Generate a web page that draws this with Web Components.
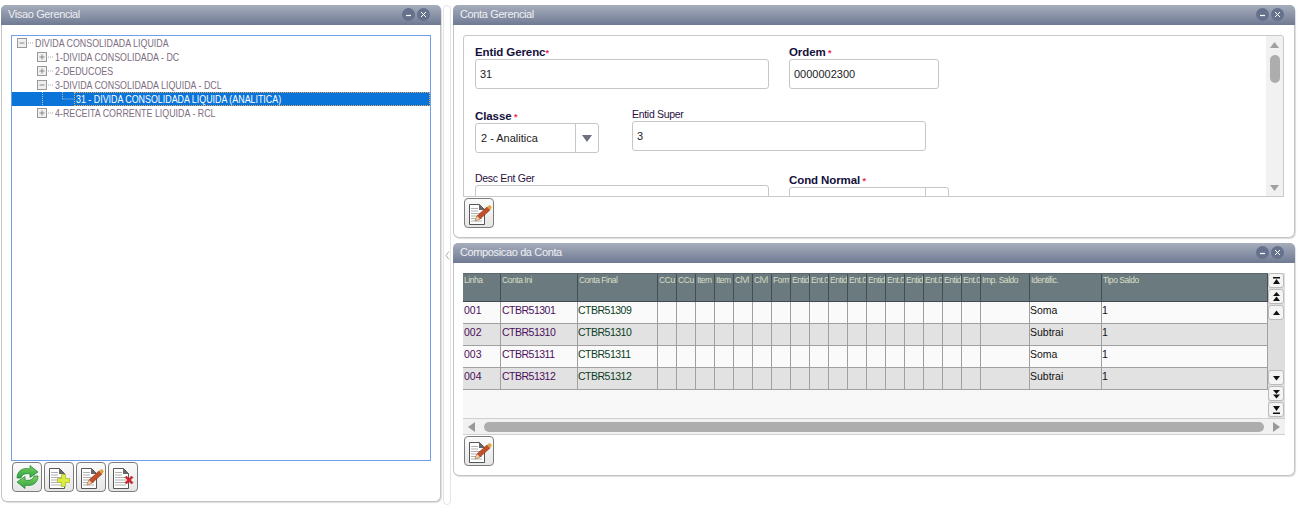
<!DOCTYPE html>
<html>
<head>
<meta charset="utf-8">
<title>Visao Gerencial</title>
<style>
  html, body { margin: 0; padding: 0; background: #fff; }
  body { font-family: "Liberation Sans", sans-serif; font-size: 11px; width: 1300px; height: 508px; overflow: hidden; }
  .page { display: flex; padding: 5px 5px 0 1px; height: 503px; box-sizing: border-box; }
  .right { display: flex; flex-direction: column; gap: 5px; width: 842px; }
</style>
</head>
<body>
<div class="page">
  <app-panel heading="Visao Gerencial" style="width:440px;height:497px">
    <app-tree>
      <tree-node kind="minus" depth="0">DIVIDA CONSOLIDADA LIQUIDA</tree-node>
      <tree-node kind="plus" depth="1">1-DIVIDA CONSOLIDADA - DC</tree-node>
      <tree-node kind="plus" depth="1">2-DEDUCOES</tree-node>
      <tree-node kind="minus" depth="1">3-DIVIDA CONSOLIDADA LIQUIDA - DCL</tree-node>
      <tree-node kind="leaf" depth="2" selected>31 - DIVIDA CONSOLIDADA LIQUIDA (ANALITICA)</tree-node>
      <tree-node kind="plus" depth="1">4-RECEITA CORRENTE LIQUIDA - RCL</tree-node>
    </app-tree>
    <div slot="actions" style="display:flex;gap:2px">
      <icon-button icon="refresh"></icon-button>
      <icon-button icon="add"></icon-button>
      <icon-button icon="edit"></icon-button>
      <icon-button icon="delete"></icon-button>
    </div>
  </app-panel>
  <panel-splitter></panel-splitter>
  <div class="right">
    <app-panel heading="Conta Gerencial" style="height:233px">
      <form-scroll>
        <div style="display:flex;gap:20px;height:53px">
          <form-field label="Entid Gerenc" required strong value="31" style="width:294px"></form-field>
          <form-field label="Ordem" required strong spaced value="0000002300" style="width:150px"></form-field>
        </div>
        <div style="display:flex;gap:33px;height:64px;margin-top:9px">
          <form-field label="Classe" required strong spaced value="2 - Analitica" select style="width:124px;padding-top:2px"></form-field>
          <form-field label="Entid Super" value="3" style="width:294px"></form-field>
        </div>
        <div style="display:flex;gap:20px">
          <form-field label="Desc Ent Ger" value="" style="width:294px"></form-field>
          <form-field label="Cond Normal" required strong spaced value="" select style="width:160px;padding-top:2px"></form-field>
        </div>
      </form-scroll>
      <div slot="actions"><icon-button icon="edit"></icon-button></div>
    </app-panel>
    <app-panel heading="Composicao da Conta" style="height:233px">
      <data-grid></data-grid>
      <div slot="actions"><icon-button icon="edit"></icon-button></div>
    </app-panel>
  </div>
</div>

<script>
// panel with title bar, body and a row of buttons
class AppPanel extends HTMLElement {
  constructor() {
    super();
    this.attachShadow({ mode: 'open' });
  }

  connectedCallback() {
    this.shadowRoot.innerHTML = `
      <style>
        :host { display: flex; flex-direction: column; box-sizing: border-box; background: #fff;
          border: 1px solid #c4c4c4; border-top: 0; border-radius: 6px;
          box-shadow: 1px 1px 1px #ddd; }
        .bar { height: 20px; flex: none; display: flex; align-items: center; padding: 0 11px 2px 7px; margin: 0 -1px; box-sizing: border-box;
          border-radius: 5px 5px 0 0; color: #eef0f4; letter-spacing: -.37px;
          background: linear-gradient(#a6adbc, #6f7a93); font: 11px "Liberation Sans", sans-serif; }
        .title { flex: 1; }
        .btn { width: 13px; height: 13px; border-radius: 50%; background: #66718d; margin-left: 2px;
          display: flex; align-items: center; justify-content: center; }
        .btn svg { display: block; }
        .body { flex: 1; min-height: 0; padding: 10px 9px 0 9px; display: flex; flex-direction: column; }
        .actions { flex: none; padding: 1px 9px 0 10px; height: 40px; box-sizing: border-box; }
      </style>
      <div class="bar">
        <span class="title">${this.getAttribute('heading')}</span>
        <span class="btn"><svg width="7" height="7"><path d="M1 4.5h5" stroke="#fff" stroke-width="1.2"/></svg></span>
        <span class="btn"><svg width="7" height="7"><path d="M1 1l5 5M6 1l-5 5" stroke="#fff" stroke-width="1"/></svg></span>
      </div>
      <div class="body"><slot></slot></div>
      <div class="actions"><slot name="actions"></slot></div>
    `;
  }
}
customElements.define('app-panel', AppPanel);

class PanelSplitter extends HTMLElement {
  constructor() {
    super();
    this.attachShadow({ mode: 'open' });
    this.shadowRoot.innerHTML = `
      <style>
        :host { display: flex; align-items: center; justify-content: center; flex: none; box-sizing: border-box;
          width: 8px; margin: 0 2px 0 2px; height: 500px; border: 1px solid #e4e4e4; border-radius: 4px; }
      </style>
      <svg width="5" height="9"><path d="M4 .5L1 4.5l3 4" fill="none" stroke="#aaa"/></svg>
    `;
  }
}
customElements.define('panel-splitter', PanelSplitter);

class AppTree extends HTMLElement {
  constructor() {
    super();
    this.attachShadow({ mode: 'open' });
    this.shadowRoot.innerHTML = `
      <style>
        :host { display: block; flex: 1; min-height: 0; box-sizing: border-box; border: 1px solid #6f9fe8; background: #fff; }
      </style>
      <slot></slot>
    `;
  }
}
customElements.define('app-tree', AppTree);

class TreeNode extends HTMLElement {
  constructor() {
    super();
    this.attachShadow({ mode: 'open' });
  }

  connectedCallback() {
    const kind = this.getAttribute('kind');
    const depth = Number(this.getAttribute('depth'));
    const selected = this.hasAttribute('selected');
    let glyph = '';
    let indent = [5, 25, 0][depth];
    if (kind === 'leaf') {
      glyph = `<svg width="62" height="14"><path d="M30.5 0v14" stroke="#b9c4d4" stroke-dasharray="1 1"/><path d="M50.5 0v7M50.5 7h11" stroke="#b9c4d4" stroke-dasharray="1 1"/></svg>`;
    } else {
      const cross = kind === 'plus' ? '<path d="M5 2.5v5" stroke="#888"/>' : '';
      glyph = `<svg width="18" height="14"><g transform="translate(0 2)"><rect x=".5" y=".5" width="9" height="9" fill="#efefef" stroke="#999"/><path d="M2.5 5h5" stroke="#888"/>${cross}<path d="M11 5h5" stroke="#aaa" stroke-dasharray="1 1"/></g></svg>`;
    }
    this.shadowRoot.innerHTML = `
      <style>
        :host { display: block; }
        .row { height: 14px; display: flex; align-items: center; padding-left: ${indent}px; box-sizing: border-box;
          font: 10.5px "Liberation Sans", sans-serif; white-space: nowrap;
          background: ${selected ? '#0a74d8' : 'transparent'}; color: ${selected ? '#fff' : '#7d6d80'}; }
        svg { display: block; flex: none; }
        .sel { flex: 1; height: 14px; box-sizing: border-box; border: 1px dotted #e8a860; line-height: 12px; padding-left: 1px; }
        .label { display: inline-block; transform: scaleX(.845); transform-origin: 0 50%; }
      </style>
      <div class="row">${glyph}${selected ? '<span class="sel"><span class="label"><slot></slot></span></span>' : '<span class="label"><slot></slot></span>'}</div>
    `;
  }
}
customElements.define('tree-node', TreeNode);

class FormScroll extends HTMLElement {
  constructor() {
    super();
    this.attachShadow({ mode: 'open' });
    this.shadowRoot.innerHTML = `
      <style>
        :host { display: flex; flex: 1; min-height: 0; box-sizing: border-box; border: 1px solid #c8c8c8; border-radius: 3px 3px 0 0; overflow: hidden; margin-right: 1px; }
        .content { flex: 1; min-width: 0; padding: 9px 0 0 11px; overflow: hidden; }
        .track { flex: none; width: 17px; background: #f1f1f1; display: flex; flex-direction: column; align-items: center; padding-top: 6px; position: relative; }
        .thumb { width: 10px; height: 28px; border-radius: 5px; background: #adadad; margin-top: 7px; }
        .down { position: absolute; bottom: 5px; }
        svg { display: block; }
      </style>
      <div class="content"><slot></slot></div>
      <div class="track">
        <svg width="9" height="6"><path d="M4.5 0L9 6H0z" fill="#a0a0a0"/></svg>
        <div class="thumb"></div>
        <svg class="down" width="9" height="6"><path d="M4.5 6L9 0H0z" fill="#a0a0a0"/></svg>
      </div>
    `;
  }
}
customElements.define('form-scroll', FormScroll);

class FormField extends HTMLElement {
  constructor() {
    super();
    this.attachShadow({ mode: 'open' });
  }

  connectedCallback() {
    const strong = this.hasAttribute('strong');
    const required = this.hasAttribute('required');
    const gap = this.hasAttribute('spaced') ? ' ' : '';
    const select = this.hasAttribute('select');
    this.shadowRoot.innerHTML = `
      <style>
        :host { display: block; box-sizing: border-box; }
        .label { height: 14px; color: ${strong ? '#14103c' : '#2a1040'};
          font: ${strong ? 'bold 11.5px' : '10.5px'}/15px "Liberation Sans", sans-serif; white-space: pre;
          letter-spacing: ${strong ? '-.1px' : '-.3px'}; }
        .req { color: #ef2b55; font-size: 9px; font-weight: bold; }
        .box { height: 30px; box-sizing: border-box; border: 1px solid #c6c6c6; border-radius: 3px; display: flex; background: #fff;
          font: 11px/28px "Liberation Sans", sans-serif; color: #222; }
        .val { flex: 1; padding-left: ${select ? 5 : 4}px; min-width: 0; }
        .arrow { flex: none; width: 22px; border-left: 1px solid #c6c6c6; display: flex; align-items: center; justify-content: center; }
      </style>
      <div class="label">${this.getAttribute('label')}${required ? `<span class="req">${gap}*</span>` : ''}</div>
      <div class="box">
        <span class="val">${this.getAttribute('value')}</span>
        ${select ? '<span class="arrow"><svg width="10" height="7"><path d="M5 7L10 0H0z" fill="#6c7080"/></svg></span>' : ''}
      </div>
    `;
  }
}
customElements.define('form-field', FormField);

const GRID_COLS = [
  ['Linha', 38], ['Conta Ini', 77], ['Conta Final', 80],
  ['CCu', 19], ['CCu', 19], ['Item', 19], ['Item', 19], ['ClVl', 19], ['ClVl', 19], ['Form', 19],
  ['Entid', 19], ['Ent.0', 19], ['Entid', 19], ['Ent.0', 19], ['Entid', 19], ['Ent.0', 19],
  ['Entid', 19], ['Ent.0', 19], ['Entid', 19], ['Ent.0', 19],
  ['Imp. Saldo', 49], ['Identific.', 72], ['Tipo Saldo', 166]
];
const GRID_ROWS = [
  ['001', 'CTBR51301', 'CTBR51309', 'Soma', '1'],
  ['002', 'CTBR51310', 'CTBR51310', 'Subtrai', '1'],
  ['003', 'CTBR51311', 'CTBR51311', 'Soma', '1'],
  ['004', 'CTBR51312', 'CTBR51312', 'Subtrai', '1']
];

class DataGrid extends HTMLElement {
  constructor() {
    super();
    this.attachShadow({ mode: 'open' });
  }

  connectedCallback() {
    const template = GRID_COLS.map(c => c[1] + 'px').join(' ');
    const head = GRID_COLS.map(c => `<div class="h">${c[0]}</div>`).join('');
    const rows = GRID_ROWS.map((r, i) => {
      const cells = GRID_COLS.map((c, n) => {
        let text = '';
        let cls = 'c';
        if (n === 0) { text = r[0]; cls += ' linha'; }
        if (n === 1) { text = r[1]; cls += ' ini'; }
        if (n === 2) { text = r[2]; cls += ' fim'; }
        if (n === 21) text = r[3];
        if (n === 22) text = r[4];
        return `<div class="${cls}">${text}</div>`;
      }).join('');
      return `<div class="row ${i % 2 ? 'odd' : ''}">${cells}</div>`;
    }).join('');
    const side = (d) => `<span class="sb"><svg width="11" height="10"><path d="${d}" fill="#111"/></svg></span>`;
    this.shadowRoot.innerHTML = `
      <style>
        :host { display: flex; flex-direction: column; flex: 1; min-height: 0; }
        .top { display: flex; flex: 1; min-height: 0; background: #f8f8f8; }
        .table { flex: none; width: 805px; }
        .row, .head { display: grid; grid-template-columns: ${template}; }
        .head { height: 29px; background: #6b7a7e; border-top: 1px solid #5c686c; border-bottom: 1px solid #404a4e; box-sizing: border-box; }
        .h { border-right: 1px solid #454f52; padding: 0 0 0 1px; color: #d9dfc6; font: 8.5px/12px "Liberation Sans", sans-serif; letter-spacing: -.45px; overflow: hidden; white-space: nowrap; box-sizing: border-box; }
        .row { height: 22px; background: #fafafa; border-bottom: 1px solid #a0a0a0; box-sizing: border-box; }
        .row.odd { background: #e2e2e2; }
        .c { border-right: 1px solid #a0a0a0; font: 10.5px/17px "Liberation Sans", sans-serif; color: #111; box-sizing: border-box; white-space: nowrap; overflow: hidden; }
        .linha { color: #4a0f5c; padding-left: 1px; }
        .ini { color: #4a0f5c; letter-spacing: -.5px; padding-left: 1px; }
        .fim { color: #0b3d22; letter-spacing: -.5px; }
        .side { flex: none; width: 17px; background: #dedede; display: flex; flex-direction: column; }
        .sb { width: 16px; height: 15px; margin-bottom: 1px; box-sizing: border-box; border: 1px solid #bbb; border-radius: 3px; background: #f4f4f4; display: flex; align-items: center; justify-content: center; }
        .sb svg { display: block; }
        .spacer { flex: 1; }
        .hbar { flex: none; height: 15px; background: #f1f1f1; border-top: 1px solid #cfcfcf; border-bottom: 1px solid #cfcfcf; display: flex; align-items: center; width: 822px; }
        .hthumb { height: 10px; flex: 1; border-radius: 5px; background: #adadad; margin: 0 9px; }
        .hbar svg { display: block; flex: none; margin-left: 5px; }
        .hbar svg:last-child { margin: 0 5px 0 0; }
      </style>
      <div class="top">
        <div class="table">
          <div class="head">${head}</div>
          ${rows}
        </div>
        <div class="side">
          ${side('M2 1h7v1.5H2zM5.5 3L9 8H2z')}
          ${side('M5.5 0L9 4H2zM5.5 4.5L9 9H2z')}
          ${side('M5.5 2.5L9 7H2z')}
          <span class="spacer"></span>
          ${side('M2 3h7L5.5 7.5z')}
          ${side('M2 1h7L5.5 5zM2 5.5h7L5.5 9.5z')}
          ${side('M2 1h7L5.5 6zM2 7.5h7V9H2z')}
        </div>
      </div>
      <div class="hbar">
        <svg width="7" height="10"><path d="M0 5L7 0v10z" fill="#999"/></svg>
        <div class="hthumb"></div>
        <svg width="7" height="10"><path d="M7 5L0 0v10z" fill="#999"/></svg>
      </div>
    `;
  }
}
customElements.define('data-grid', DataGrid);

const SHEET = `
  <path d="M4.5 5.5h10l5 5v15h-15z" fill="#fff" stroke="#444" stroke-width=".9"/>
  <path d="M14 5l6 6h-6z" fill="#666"/>
  <path d="M6 9.5h7M6 12h7M6 14.5h11M6 17h11M6 19.5h11M6 22h11" stroke="#b0b0b0"/>`;
const ICONS = {
  refresh: `
    <defs>
      <linearGradient id="g1" x1="0" y1="0" x2="0" y2="1"><stop offset="0" stop-color="#7fce5a"/><stop offset="1" stop-color="#2aa544"/></linearGradient>
    </defs>
    <path d="M4 15C4 8 10 4 17 6V2.5l8 6.5-8 5.5V11c-4-1-8 0-9 4z" fill="url(#g1)" stroke="#1c8233" stroke-width=".7"/>
    <path d="M25 13c0 7-6 11-13 9v3.5l-8-6.5 8-5.5V17c4 1 8 0 9-4z" fill="url(#g1)" stroke="#1c8233" stroke-width=".7"/>`,
  add: SHEET + `<path d="M16.500 11.500h4v4h4v4h-4v4h-4v-4h-4v-4h4z" fill="#dcee3c" stroke="#a4b52a" stroke-width=".7"/>`,
  edit: SHEET + `
    <path d="M10 22l2-5 10-9 3 3-10 9z" fill="#c4502a" stroke="#7c2f14" stroke-width=".6"/>
    <path d="M22 8l1-1a2 2 0 0 1 3 3l-1 1z" fill="#e3a63c"/>
    <path d="M10 22l2-5 3 3z" fill="#eccf9f"/>`,
  delete: SHEET + `<path d="M16 14.500l1.500-1.500 2.500 2.500 2.500-2.500 1.500 1.500-2.500 2.500 2.500 2.500-1.500 1.500-2.500-2.500-2.500 2.500-1.500-1.500 2.500-2.500z" fill="#d8252b" stroke="#9b1a1e" stroke-width=".5"/>`
};

class IconButton extends HTMLElement {
  constructor() {
    super();
    this.attachShadow({ mode: 'open' });
  }

  connectedCallback() {
    this.shadowRoot.innerHTML = `
      <style>
        :host { display: inline-flex; align-items: center; justify-content: center; box-sizing: border-box; width: 30px; height: 30px;
          border: 1px solid #7c7c7c; border-radius: 4px; background: linear-gradient(#fbfbfb, #e6e6e6); }
        svg { display: block; }
      </style>
      <svg width="28" height="28" viewBox="0 0 28 28">${ICONS[this.getAttribute('icon')]}</svg>
    `;
  }
}
customElements.define('icon-button', IconButton);
</script>
</body>
</html>
